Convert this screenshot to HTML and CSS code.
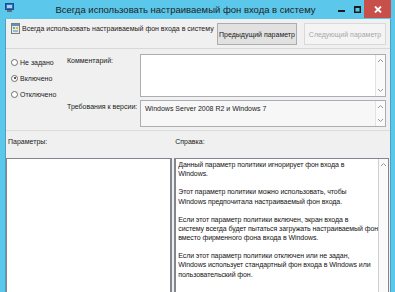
FILE: index.html
```html
<!DOCTYPE html>
<html lang="ru">
<head>
    <meta charset="UTF-8">
    <title>Всегда использовать настраиваемый фон входа в систему</title>
    <link rel="stylesheet" href="styles.css">
</head>
<body>
    <div class="window">
        <div class="titlebar">
            <svg class="app-icon" width="9" height="9" viewBox="0 0 9 9">
                <rect x="0.5" y="0.5" width="8" height="6" fill="#2f6fc0" stroke="#1d4a8a"/>
                <rect x="2" y="2" width="5" height="3" fill="#9fd4f5"/>
                <rect x="2" y="7" width="5" height="2" fill="#6b6b6b"/>
            </svg>
            <div class="title">Всегда использовать настраиваемый фон входа в систему</div>
            <div class="controls">
                <span class="ctl ctl-min">
                    <svg width="7" height="7" viewBox="0 0 7 7"><rect x="0" y="4" width="7" height="2" fill="#1c1c1c"/></svg>
                </span>
                <span class="ctl ctl-max">
                    <svg width="7" height="7" viewBox="0 0 7 7"><rect x="0.75" y="0.75" width="5.5" height="5.5" fill="none" stroke="#1c1c1c" stroke-width="1.5"/><rect x="0" y="0" width="7" height="2" fill="#1c1c1c"/></svg>
                </span>
                <span class="ctl ctl-close">
                    <svg width="8" height="7" viewBox="0 0 8 7"><path d="M1 0.5 L7 6.5 M7 0.5 L1 6.5" stroke="#fff" stroke-width="1.8"/></svg>
                </span>
            </div>
        </div>

        <div class="client">
            <div class="top">
                <div class="policy-name">
                    <svg class="policy-icon" width="9" height="11" viewBox="0 0 9 11">
                        <rect x="0.5" y="0.5" width="8" height="10" fill="#e9e9e9" stroke="#7d7d7d"/>
                        <rect x="1" y="1" width="7" height="2" fill="#5d8fc9"/>
                        <rect x="2" y="4" width="2" height="2" fill="#79b84a"/>
                        <rect x="5" y="4" width="2" height="2" fill="#e2b437"/>
                        <rect x="2" y="7" width="5" height="2" fill="#9ab7d8"/>
                    </svg>
                    <span>Всегда использовать настраиваемый фон входа в систему</span>
                </div>
                <div class="nav">
                    <button type="button" class="btn btn-prev">Предыдущий параметр</button>
                    <button type="button" class="btn btn-next" disabled>Следующий параметр</button>
                </div>
            </div>

            <div class="settings">
                <div class="radios">
                    <label class="radio"><span class="dot"></span>Не задано</label>
                    <label class="radio"><span class="dot checked"></span>Включено</label>
                    <label class="radio"><span class="dot"></span>Отключено</label>
                </div>
                <div class="fields">
                    <div class="field">
                        <div class="field-label">Комментарий:</div>
                        <div class="box box-comment">
                            <div class="box-text"></div>
                            <div class="vscroll">
                                <svg width="7" height="5" viewBox="0 0 7 5"><path d="M1 4 L3.5 1.5 L6 4" fill="none" stroke="#9a9a9a"/></svg>
                                <svg width="7" height="5" viewBox="0 0 7 5"><path d="M1 1 L3.5 3.5 L6 1" fill="none" stroke="#9a9a9a"/></svg>
                            </div>
                        </div>
                    </div>
                    <div class="field">
                        <div class="field-label">Требования к версии:</div>
                        <div class="box box-version">
                            <div class="box-text">Windows Server 2008 R2 и Windows 7</div>
                            <div class="vscroll">
                                <svg width="7" height="5" viewBox="0 0 7 5"><path d="M1 4 L3.5 1.5 L6 4" fill="none" stroke="#9a9a9a"/></svg>
                                <svg width="7" height="5" viewBox="0 0 7 5"><path d="M1 1 L3.5 3.5 L6 1" fill="none" stroke="#9a9a9a"/></svg>
                            </div>
                        </div>
                    </div>
                </div>
            </div>

            <div class="panes">
                <div class="pane pane-params">
                    <div class="pane-title">Параметры:</div>
                    <div class="pane-box"></div>
                </div>
                <div class="pane pane-help">
                    <div class="pane-title">Справка:</div>
                    <div class="pane-box help">
                        <div class="help-text">
                            <p>Данный параметр политики игнорирует фон входа в<br>Windows.</p>
                            <p>Этот параметр политики можно использовать, чтобы<br>Windows предпочитала настраиваемый фон входа.</p>
                            <p>Если этот параметр политики включен, экран входа в<br>систему всегда будет пытаться загружать настраиваемый фон<br>вместо фирменного фона входа в Windows.</p>
                            <p>Если этот параметр политики отключен или не задан,<br>Windows использует стандартный фон входа в Windows или<br>пользовательский фон.</p>
                        </div>
                        <div class="vscroll">
                            <svg width="7" height="5" viewBox="0 0 7 5"><path d="M1 4 L3.5 1.5 L6 4" fill="none" stroke="#9a9a9a"/></svg>
                        </div>
                    </div>
                </div>
            </div>
        </div>
    </div>
</body>
</html>
```

FILE: styles.css
```css
* {
    margin: 0;
    padding: 0;
    box-sizing: border-box;
}

body {
    width: 395px;
    height: 292px;
    overflow: hidden;
    background: #5bc7ea;
    font-family: 'Liberation Sans', Arial, sans-serif;
    font-size: 7px;
    color: #1a1a1a;
}

.window {
    display: flex;
    flex-direction: column;
    height: 292px;
}

/* title bar */
.titlebar {
    display: flex;
    align-items: flex-start;
    height: 19px;
    padding-left: 5px;
}

.app-icon {
    margin-top: 3px;
}

.title {
    flex: 1;
    text-align: center;
    font-size: 9.5px;
    line-height: 19px;
    color: #222;
    padding-left: 24px;
}

.controls {
    display: flex;
    margin-right: 4px;
}

.ctl {
    display: flex;
    align-items: center;
    justify-content: center;
    height: 18px;
}

.ctl-min {
    width: 16px;
    margin-right: 1px;
}

.ctl-max {
    width: 14px;
}

.ctl-close {
    width: 27px;
    background: #c7504b;
}

/* client area */
.client {
    flex: 1;
    margin: 0 4px 0 5px;
    background: #f0f0f0;
    border-left: 1px solid #4f9fbf;
    border-right: 1px solid #4f9fbf;
    display: flex;
    flex-direction: column;
}

.top {
    display: flex;
    justify-content: space-between;
    align-items: flex-start;
    height: 30px;
    padding: 4px 4px 0 5px;
    border-bottom: 1px solid #d8d8d8;
}

.policy-name {
    display: flex;
    align-items: center;
    gap: 2px;
}

.nav {
    display: flex;
    gap: 7px;
}

.btn {
    height: 22px;
    font-family: inherit;
    font-size: 7px;
    border: 1px solid #adadad;
    background: #e1e1e1;
    color: #1a1a1a;
}

.btn-prev {
    width: 80px;
}

.btn-next {
    width: 82px;
    border-color: #d9d9d9;
    background: #f4f4f4;
    color: #a8a8a8;
}

/* settings */
.settings {
    display: flex;
    padding: 5px 4px 3px 5px;
    border-bottom: 1px solid #dcdcdc;
}

.radios {
    width: 56px;
    display: flex;
    flex-direction: column;
}

.radio {
    display: flex;
    align-items: center;
    gap: 2px;
    height: 16px;
}

.dot {
    width: 7px;
    height: 7px;
    border: 1px solid #6e6e6e;
    border-radius: 50%;
    background: #fff;
    position: relative;
}

.dot.checked::after {
    content: "";
    position: absolute;
    left: 1.5px;
    top: 1.5px;
    width: 2px;
    height: 2px;
    border-radius: 50%;
    background: #222;
}

.fields {
    flex: 1;
    display: flex;
    flex-direction: column;
    gap: 3px;
}

.field {
    display: flex;
}

.field-label {
    width: 73px;
    padding-top: 3px;
}

.box {
    flex: 1;
    display: flex;
    background: #fff;
    border: 1px solid #abadb3;
}

.box-comment {
    height: 43px;
}

.box-version {
    height: 27px;
    background: #f7f7f7;
}

.box-text {
    flex: 1;
    padding: 4px;
}

.vscroll {
    width: 10px;
    display: flex;
    flex-direction: column;
    justify-content: space-between;
    align-items: center;
    padding: 3px 0;
    border-left: 1px solid #e3e3e3;
    background: #fafafa;
}

/* panes */
.panes {
    flex: 1;
    display: flex;
    gap: 2px;
    padding: 6px 1px 0 0;
}

.pane {
    display: flex;
    flex-direction: column;
}

.pane-params {
    width: 169px;
}

.pane-help {
    flex: 1;
}

.pane-title {
    height: 21px;
    padding-left: 2px;
    padding-top: 1px;
}

.pane-help .pane-title {
    padding-left: 1px;
}

.pane-box {
    flex: 1;
    background: #fff;
    border: 1px solid #82878f;
    border-left-width: 2px;
    border-bottom: none;
}

.pane-params .pane-box {
    border-left-width: 1px;
    border-right-width: 2px;
}

.help {
    display: flex;
}

.help-text {
    flex: 1;
    min-width: 0;
    overflow: hidden;
    white-space: nowrap;
    padding: 1px 0 1px 2px;
    line-height: 9.3px;
    letter-spacing: -0.08px;
    color: #141414;
}

.help-text p {
    margin-bottom: 8.7px;
}

.help .vscroll {
    justify-content: flex-start;
    border-left: 1px solid #d0d0d0;
}
```
